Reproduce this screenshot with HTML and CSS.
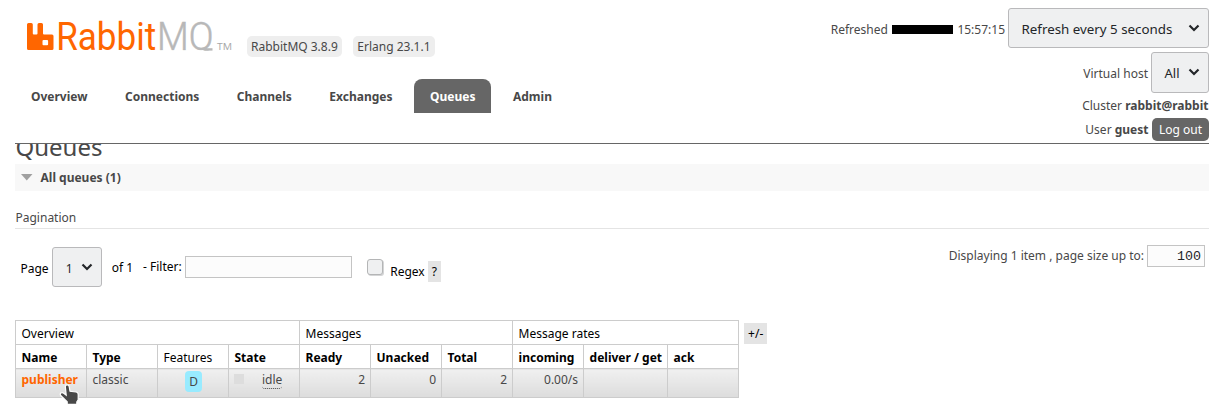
FILE: index.html
```html
<!DOCTYPE html>
<html lang="en">
<head>
<meta charset="utf-8">
<title>RabbitMQ Management</title>
<link rel="stylesheet" href="styles.css">
</head>
<body>
<header class="header">
  <div class="brand">
    <div class="logo-row">
      <svg class="logo" width="206" height="36" viewBox="0 0 206 36" role="img" aria-label="RabbitMQ">
        <clipPath id="baseline"><path d="M0 0h206v32.600H0z"/></clipPath>
        <path fill="#f60" fill-rule="evenodd" d="M1.500 5h2.800q1.500 0 1.500 1.500v9q0 1 1 1h2.700q1 0 1-1v-9Q10.500 5 12 5h2.500q1.500 0 1.500 1.500v9q0 1 1 1h8q1.500 0 1.500 1.500v12.500q0 1.500-1.500 1.500H1.500Q0 32 0 30.500V6.500Q0 5 1.500 5zM16.500 22q-1 0-1 1v3.200q0 1 1 1h3.600q1 0 1-1V23q0-1-1-1z"/>
        <text class="logo-rabbit" x="29.200" y="32.300" textLength="100" lengthAdjust="spacingAndGlyphs">Rabbit</text>
        <g clip-path="url(#baseline)">
          <text class="logo-mq" x="130" y="32.300" textLength="56.500" lengthAdjust="spacingAndGlyphs">MQ</text>
        </g>
        <path class="logo-tail" d="M176.500 31.400h9"/>
        <text class="logo-tm" x="190" y="32" textLength="15" lengthAdjust="spacingAndGlyphs">TM</text>
      </svg>
      <span class="version">RabbitMQ 3.8.9</span>
      <span class="version">Erlang 23.1.1</span>
    </div>
    <nav class="tabs">
      <a class="tab">Overview</a>
      <a class="tab">Connections</a>
      <a class="tab">Channels</a>
      <a class="tab">Exchanges</a>
      <a class="tab tab-selected">Queues</a>
      <a class="tab">Admin</a>
    </nav>
  </div>
  <div class="login">
    <div class="login-row row-refresh">
      <span class="refreshed">Refreshed</span><span class="redacted"></span><span class="time">15:57:15</span>
      <div class="select select-refresh">Refresh every 5 seconds
        <svg class="chevron" width="12" height="8" viewBox="0 0 12 8"><path d="M1.500 1.500 6 6l4.500-4.500"/></svg>
      </div>
    </div>
    <div class="login-row row-vhost">
      <span class="vhost">Virtual host</span>
      <div class="select select-vhost">All
        <svg class="chevron" width="12" height="8" viewBox="0 0 12 8"><path d="M1.500 1.500 6 6l4.500-4.500"/></svg>
      </div>
    </div>
    <div class="login-row row-cluster"><span>Cluster <b>rabbit@rabbit</b></span></div>
    <div class="login-row row-user"><span>User <b>guest</b></span><button class="logout">Log out</button></div>
  </div>
</header>
<main class="main">
  <h1 class="title">Queues</h1>
  <h2 class="section"><svg width="12" height="7" viewBox="0 0 12 7"><path fill="#a0a0a0" d="M0 0h11.500L5.750 6.500z"/></svg>All queues (1)</h2>
  <h3 class="subhead">Pagination</h3>
  <div class="filters">
    <span class="lbl-page">Page</span>
    <div class="select select-page">1
      <svg class="chevron" width="12" height="8" viewBox="0 0 12 8"><path d="M1.500 1.500 6 6l4.500-4.500"/></svg>
    </div>
    <span class="lbl-of">of 1</span>
    <span class="lbl-filter">- Filter:</span>
    <input class="field field-filter" type="text">
    <span class="check"></span>
    <span class="lbl-regex">Regex</span>
    <span class="help">?</span>
    <span class="lbl-size">Displaying 1 item , page size up to:</span>
    <input class="field field-size" type="text" value="100">
  </div>
  <div class="list">
    <table class="queues">
      <colgroup><col class="c"><col class="c"><col class="c"><col class="c"><col class="c"><col class="c"><col class="c"><col class="c"><col class="c-wide"><col class="c"></colgroup>
      <thead>
        <tr><th class="group" colspan="4">Overview</th><th class="group" colspan="3">Messages</th><th class="group" colspan="3">Message rates</th></tr>
        <tr><th>Name</th><th>Type</th><th class="group">Features</th><th>State</th><th>Ready</th><th>Unacked</th><th>Total</th><th>incoming</th><th>deliver / get</th><th>ack</th></tr>
      </thead>
      <tbody>
        <tr>
          <td><a class="queue-link">publisher</a></td>
          <td>classic</td>
          <td class="center"><span class="durable">D</span></td>
          <td><div class="state"><span class="state-dot"></span><span class="state-name">idle</span></div></td>
          <td class="num">2</td><td class="num">0</td><td class="num">2</td><td class="num">0.00/s</td><td></td><td></td>
        </tr>
      </tbody>
    </table>
    <span class="columns-toggle">+/-</span>
  </div>
</main>
<svg class="cursor" width="22" height="24" viewBox="0 0 22 24"><path d="M6.300 3.400Q6.500 1.800 8.200 1.800 9.800 1.800 10.200 3.600L11 8.300l6 .7q2.200.3 2.200 2.500v5.200l-1.400 2.200v2.500H8.200v-2.700L1.700 12.500Q.700 11 1.900 10 3.200 9 4.700 10.200l2.500 1.900z"/></svg>
</body>
</html>
```

FILE: styles.css
```css
* { box-sizing: border-box; }
body {
  margin: 0;
  width: 1224px;
  height: 411px;
  overflow: hidden;
  padding: 0 15px;
  background: #fff;
  color: #484848;
  font: 12px/17px "Noto Sans", sans-serif;
}
.header {
  display: flex;
  justify-content: space-between;
  height: 144px;
  border-bottom: 1px solid #666;
}
.logo-row { display: flex; height: 79px; padding: 18px 0 0 12px; }
.logo { margin-right: 14px; overflow: visible; }
.logo-rabbit, .logo-mq { font: 38px Roboto, sans-serif; fill: #f60; }
.logo-mq { fill: #b8b8b8; font-weight: 300; stroke: #b8b8b8; stroke-width: .5px; }
.logo-tail { stroke: #b8b8b8; stroke-width: 2.4px; }
.logo-tm { font: 9px "Open Sans", sans-serif; fill: #a8a8a8; }
.version {
  height: 21px;
  margin: 18px 12px 0 0;
  padding: 2px 4px;
  border-radius: 5px;
  background: #eee;
  white-space: nowrap;
}
.version + .version { margin-left: -.5px; }
.tabs { display: flex; gap: 5.5px; }
.tab { height: 34px; padding: 9px 16px 8px; font-weight: 700; }
.tab-selected { border-radius: 8px 8px 0 0; background: #666; color: #fff; }
.login { display: flex; flex-direction: column; padding-top: 8px; }
.login-row { display: flex; justify-content: flex-end; align-items: center; white-space: nowrap; }
.row-refresh { height: 40px; margin-bottom: 4px; }
.row-vhost { height: 41px; gap: 3px; }
.row-cluster { height: 17px; margin-top: 4px; padding-right: .5px; }
.row-user { height: 23px; margin-top: 4px; gap: 3.5px; }
.refreshed, .time, .vhost { padding-top: 2px; }
.redacted { width: 61px; height: 9px; margin: 2px 4px 0 4.5px; background: #000; }
.time { margin-right: 3px; }
.select {
  display: flex;
  align-items: center;
  justify-content: space-between;
  height: 40px;
  padding: 2px 8px 0 12.500px;
  border: 1px solid #b9b9bb;
  border-radius: 3px;
  background: #eff0f1;
  color: #232629;
  font-size: 13.333px;
}
.select-refresh { width: 201px; }
.select-vhost { width: 58px; height: 41px; font-size: 13px; padding-left: 12.5px; }
.select-page { width: 50px; margin: 2px 9.500px 0 3.500px; font-size: 12px; }
.chevron { fill: none; stroke: #232629; stroke-width: 2.2; margin-top: -3px; }
.logout {
  width: 57px;
  height: 23px;
  padding: 0;
  border: 0;
  border-radius: 5px;
  background: #666;
  color: #fff;
  font: inherit;
}
.main { overflow: hidden; height: 267px; }
.title { height: 34px; margin: -14px 0 0; padding-left: .5px; font-size: 24px; font-weight: 400; line-height: 33px; }
.section {
  display: flex;
  align-items: center;
  gap: 7.5px;
  height: 27px;
  margin: 0;
  padding-left: 6px;
  background: #f8f8f8;
  font-size: 12px;
}
.subhead {
  height: 20px;
  margin: 18px 0 0;
  padding-left: .5px;
  border-bottom: 1px solid #e4e4e4;
  font-size: 12px;
  font-weight: 400;
}
.filters { display: flex; align-items: flex-start; height: 91px; padding: 16px 4px 0 5.500px; color: #000; white-space: nowrap; }
.lbl-page { margin-top: 15px; }
.lbl-of { margin-top: 14px; }
.lbl-filter { margin: 13px 3.500px 0 10px; }
.field {
  height: 22px;
  padding: 0 3px;
  border: 1px solid #c4c4c4;
  border-radius: 0;
  background: #fcfcfc;
  color: #232629;
  font: 13.333px "Liberation Mono", monospace;
}
.field-filter { width: 167px; margin-top: 11px; }
.field-size { width: 58px; text-align: right; }
.check {
  width: 16px;
  height: 16px;
  margin: 14px 7px 0 15px;
  border: 1px solid #b4b5b6;
  border-radius: 3px;
  background: #eff0f1;
  box-shadow: 1px 1px 0 #d4d5d6;
}
.lbl-regex { margin: 18px 3px 0 0; }
.help, .columns-toggle { height: 21px; padding: 2px 4px; background: #e4e4e4; color: #000; }
.help { margin-top: 16px; }
.lbl-size { margin: 2px 3px 0 auto; color: #484848; }
.list { display: flex; gap: 5px; align-items: flex-start; }
.queues { width: 724px; table-layout: fixed; border-collapse: collapse; }
.c { width: 71px; }
.c-wide { width: 84px; }
.queues th, .queues td { border: 1px solid #ccc; padding: 4px 5px 2px 5.500px; text-align: left; white-space: nowrap; vertical-align: top; }
.queues th { height: 24px; color: #000; }
.queues .group { font-weight: 400; }
.queues td { height: 29px; padding-top: 2px; background: linear-gradient(#f0f0f0, #dcdcdc); }
.queues .num { text-align: right; }
.queues .center { text-align: center; }
.queue-link { color: #f60; font-weight: 700; }
.durable { display: inline-block; width: 17px; height: 21px; margin: 0 0 0 1px; padding-top: 2px; border-radius: 4px; background: #98ebff; }
.state { display: flex; align-items: flex-start; }
.state-dot { width: 10px; height: 10px; margin: 3px 18px 0 -.5px; background: #ddd; }
.state-name { height: 18px; border-bottom: 1px dotted #484848; border-radius: 3px; }
.columns-toggle { margin-top: 3px; }
.cursor { position: absolute; left: 59px; top: 383px; fill: #484848; stroke: #fff; stroke-width: 1.2; }
```
